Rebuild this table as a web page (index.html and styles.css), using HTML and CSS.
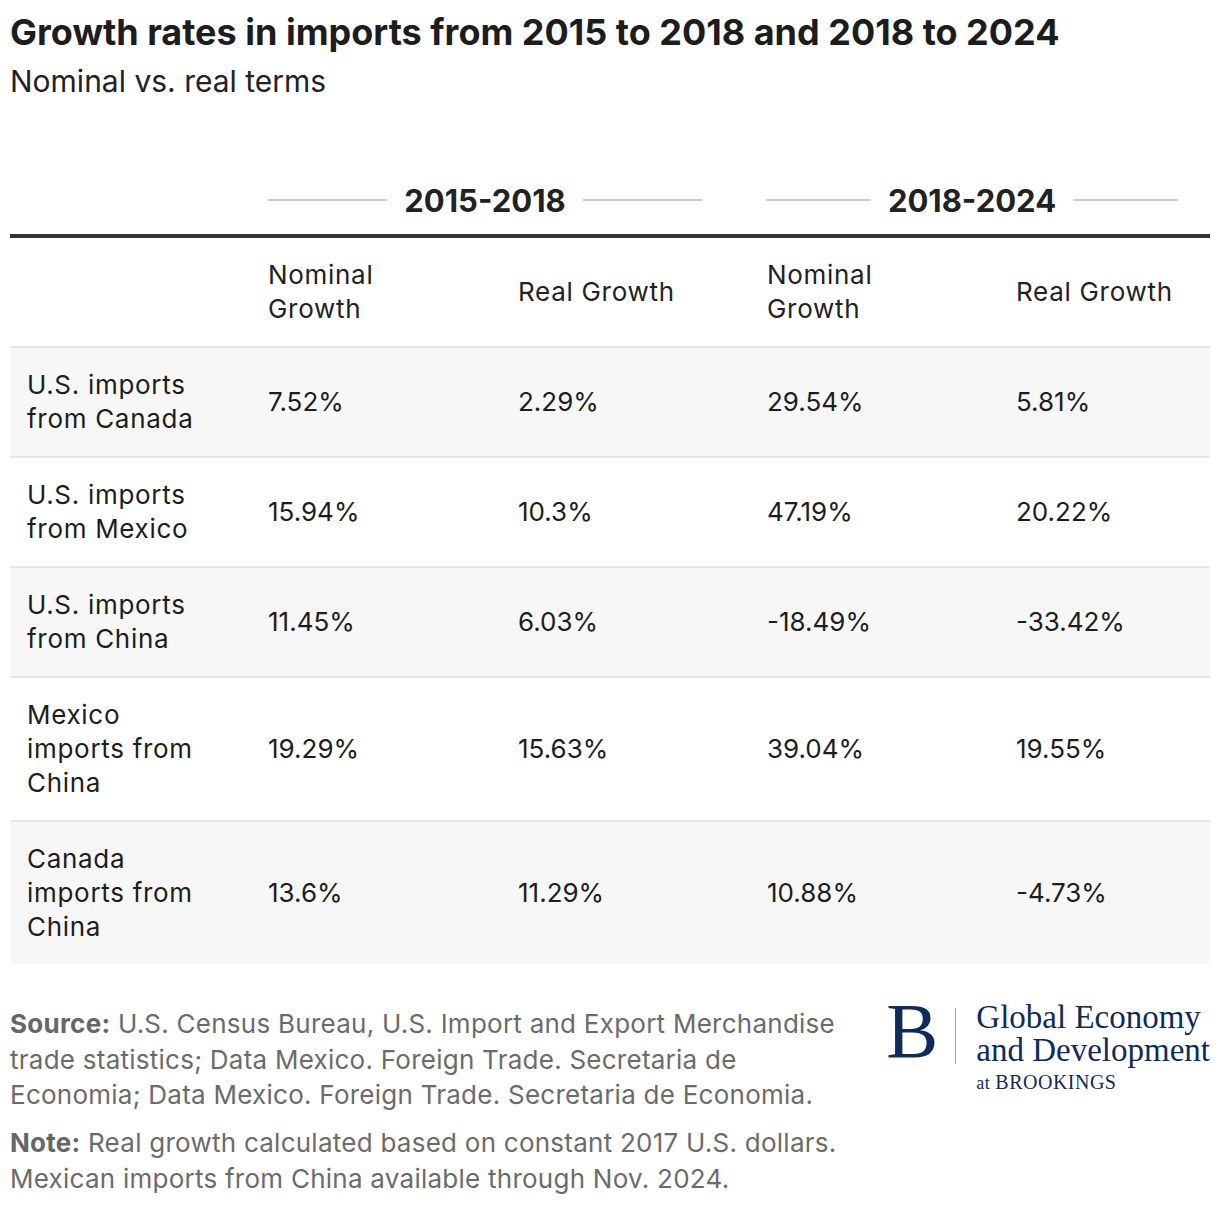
FILE: index.html
```html
<!DOCTYPE html>
<html>
<head>
<meta charset="utf-8">
<link rel="stylesheet" href="styles.css">
</head>
<body>
<div class="chart">
  <h1 class="title">Growth rates in imports from 2015 to 2018 and 2018 to 2024</h1>
  <p class="subtitle">Nominal vs. real terms</p>

  <div class="table">
    <div class="groups">
      <div class="group g1"><span class="gline"></span><span class="glabel">2015-2018</span><span class="gline"></span></div>
      <div class="group g2"><span class="gline"></span><span class="glabel">2018-2024</span><span class="gline"></span></div>
    </div>
    <div class="row head">
      <div class="cell first"></div>
      <div class="cell">Nominal<br>Growth</div>
      <div class="cell">Real Growth</div>
      <div class="cell">Nominal<br>Growth</div>
      <div class="cell">Real Growth</div>
    </div>
    <div class="row alt">
      <div class="cell first">U.S. imports<br>from Canada</div>
      <div class="cell">7.52%</div>
      <div class="cell">2.29%</div>
      <div class="cell">29.54%</div>
      <div class="cell">5.81%</div>
    </div>
    <div class="row">
      <div class="cell first">U.S. imports<br>from Mexico</div>
      <div class="cell">15.94%</div>
      <div class="cell">10.3%</div>
      <div class="cell">47.19%</div>
      <div class="cell">20.22%</div>
    </div>
    <div class="row alt">
      <div class="cell first">U.S. imports<br>from China</div>
      <div class="cell">11.45%</div>
      <div class="cell">6.03%</div>
      <div class="cell">-18.49%</div>
      <div class="cell">-33.42%</div>
    </div>
    <div class="row">
      <div class="cell first">Mexico<br>imports from<br>China</div>
      <div class="cell">19.29%</div>
      <div class="cell">15.63%</div>
      <div class="cell">39.04%</div>
      <div class="cell">19.55%</div>
    </div>
    <div class="row alt last">
      <div class="cell first">Canada<br>imports from<br>China</div>
      <div class="cell">13.6%</div>
      <div class="cell">11.29%</div>
      <div class="cell">10.88%</div>
      <div class="cell">-4.73%</div>
    </div>
  </div>

  <div class="footer">
    <div class="notes">
      <p class="note"><b>Source:</b> U.S. Census Bureau, U.S. Import and Export Merchandise trade statistics; Data Mexico. Foreign Trade. Secretaria de Economia; Data Mexico. Foreign Trade. Secretaria de Economia.</p>
      <p class="note"><b>Note:</b> Real growth calculated based on constant 2017 U.S. dollars. Mexican imports from China available through Nov. 2024.</p>
    </div>
    <div class="logo">
      <span class="logo-b">B</span>
      <span class="logo-sep"></span>
      <div class="logo-text">
        <span class="logo-line">Global Economy</span>
        <span class="logo-line">and Development</span>
        <span class="logo-at">at <span class="caps">BROOKINGS</span></span>
      </div>
    </div>
  </div>
</div>
</body>
</html>
```

FILE: styles.css
```css
html, body {
  margin: 0;
  padding: 0;
  background: #fff;
}
.chart {
  padding: 0 10px;
  width: 1200px;
  font-family: Inter, "Noto Sans", sans-serif;
  color: #1d1d1d;
}
.title {
  margin: 0;
  padding-top: 10px;
  font-size: 36px;
  line-height: 44px;
  font-weight: 700;
  color: #1d1d1d;
}
.subtitle {
  margin: 9px 0 0;
  font-size: 30px;
  line-height: 36px;
  color: #222;
}
.table {
  margin-top: 81px;
}
.groups {
  display: flex;
  align-items: center;
  height: 40px;
  padding-left: 258px;
  padding-bottom: 14px;
}
.group {
  display: flex;
  align-items: center;
  gap: 17px;
}
.g1 { width: 434px; }
.g2 { width: 412px; margin-left: 64px; }
.gline {
  flex: 1;
  height: 2px;
  background: #cccccc;
}
.glabel {
  font-size: 31px;
  font-weight: 700;
  color: #222;
}
.row {
  display: grid;
  grid-template-columns: 258px 250px 249px 249px 194px;
  align-items: center;
  border-bottom: 2px solid #e8e8e8;
  font-size: 26px;
  line-height: 34px;
}
.row.head {
  border-top: 4px solid #333;
  color: #222;
}
.row.head .cell,
.cell.first {
  letter-spacing: 0.7px;
}
.row.alt { background: #f7f7f7; }
.row.last { border-bottom: 0; }
.cell {
  padding: 20px 0;
}
.cell.first {
  padding-left: 17px;
}
.footer {
  display: flex;
  justify-content: space-between;
  align-items: flex-start;
  margin-top: 42px;
}
.notes {
  width: 850px;
}
.note {
  margin: 0 0 12.5px;
  font-size: 26px;
  line-height: 35.5px;
  letter-spacing: 0.25px;
  color: #6b6b6b;
}
.note b {
  font-weight: 700;
  color: #666;
}
.logo {
  display: flex;
  align-items: flex-start;
  color: #0f2b5b;
  font-family: "Liberation Serif", "Times New Roman", serif;
  margin-top: -8px;
  margin-right: 0;
}
.logo-b {
  font-size: 78px;
  line-height: 66px;
  margin-right: 17px;
}
.logo-sep {
  width: 1px;
  height: 56px;
  background: #9aa6bb;
  margin-right: 20px;
  margin-top: 10px;
}
.logo-text {
  display: flex;
  flex-direction: column;
  padding-top: 3px;
}
.logo-line {
  font-size: 33px;
  line-height: 33px;
  white-space: nowrap;
}
.logo-at {
  font-size: 18px;
  line-height: 30px;
  letter-spacing: 0.5px;
}
.logo-at .caps {
  font-size: 20px;
}
```
